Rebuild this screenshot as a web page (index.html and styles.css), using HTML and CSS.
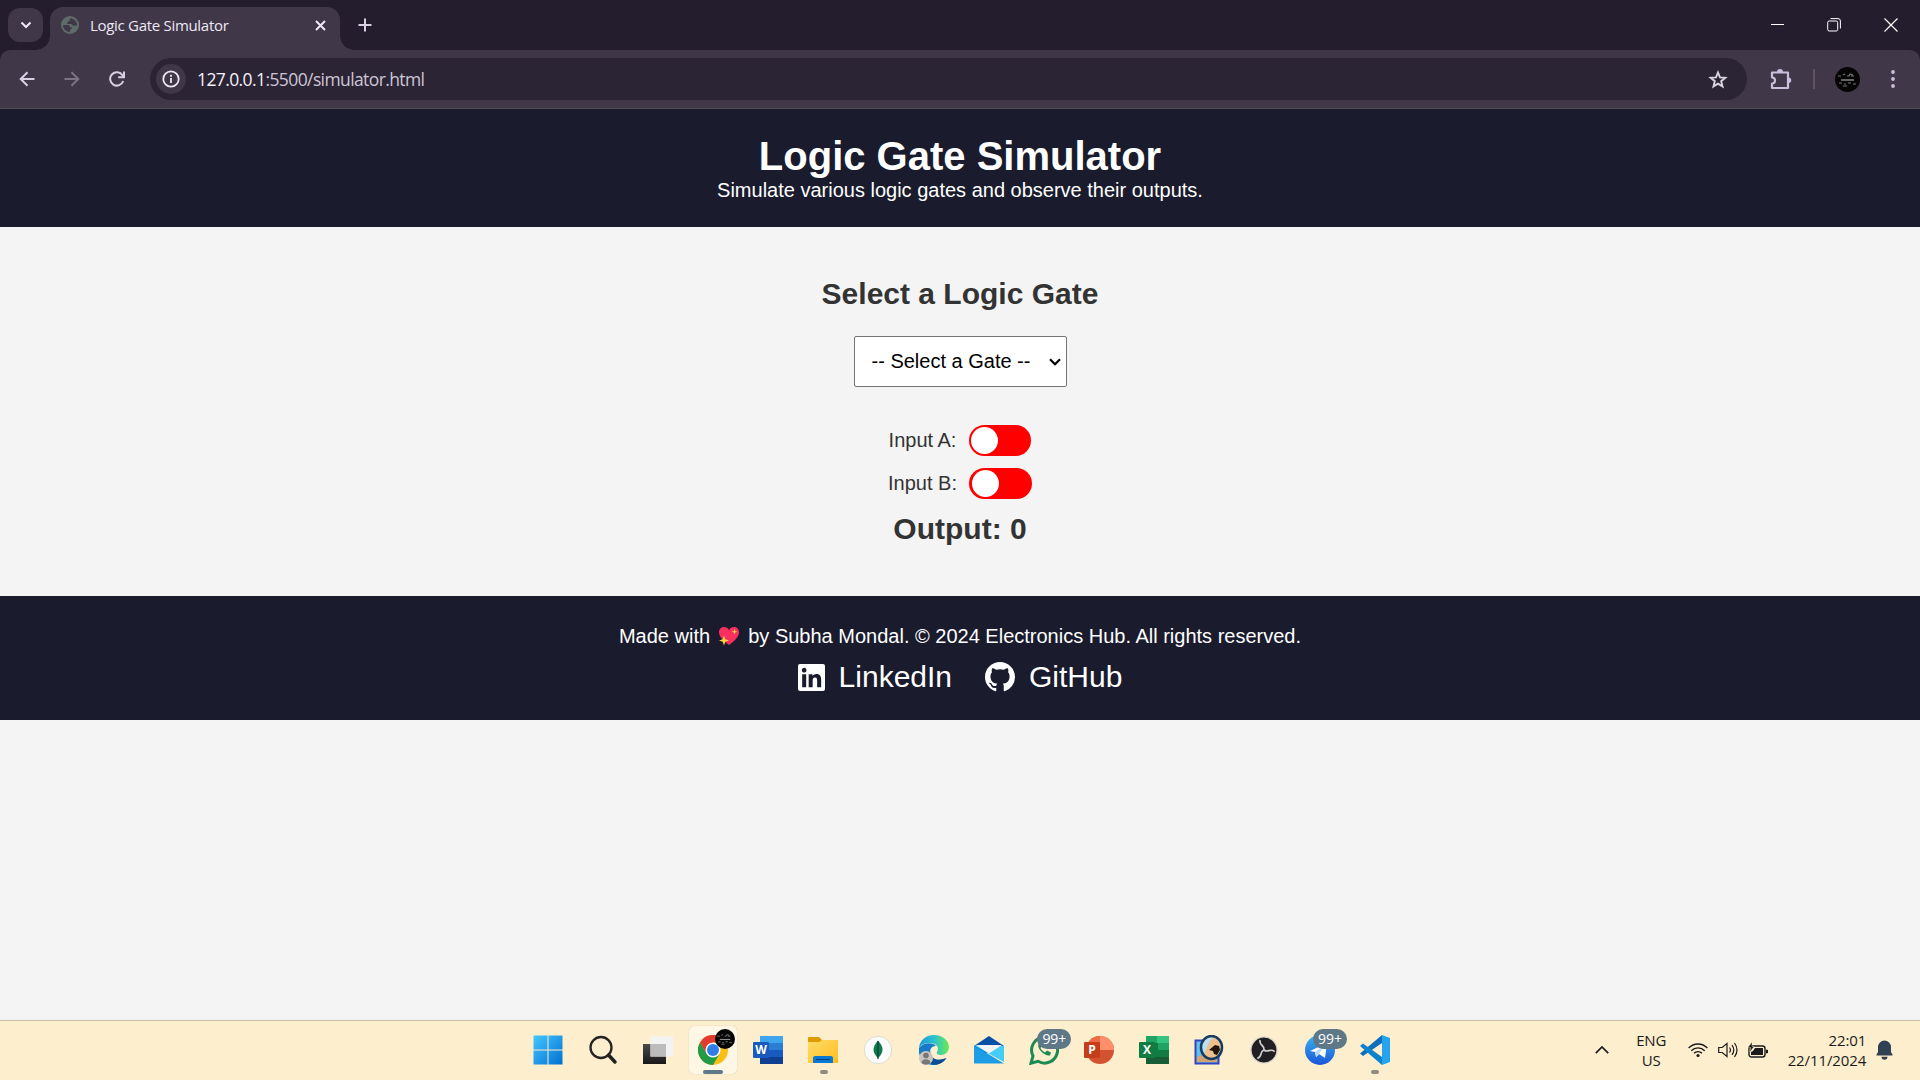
FILE: index.html
```html
<!DOCTYPE html>
<html lang="en">
<head>
<meta charset="utf-8">
<title>Logic Gate Simulator</title>
<link rel="stylesheet" href="styles.css">
</head>
<body>
<div class="browser">
<div class="tabstrip">
  <div class="tabsearch"><svg width="12" height="8" viewBox="0 0 12 8" fill="none" stroke="#eee8f4" stroke-width="2"><path d="M1.500 1.500 6 6l4.500-4.500"/></svg></div>
  <div class="tab">
    <svg width="18" height="18" viewBox="0 0 18 18"><circle cx="9" cy="9" r="9" fill="#5f6b68"/><path d="M9.500 2.200A7 7 0 0 1 16 9.500l-3.500.2c-1 0-1.300-1.700-2.500-1.700H6.500c-.8-1.300-.2-2.500 1-2.500 1.300 0 1-.8 1-1.700zM2 9h4.500c2 0 2.500 1 2.500 2.200l2 .3c0 1.500-1 1.700-2 1.900V16A7 7 0 0 1 2 9z" fill="#403749"/></svg>
    <span class="tab-title">Logic Gate Simulator</span>
    <svg width="11" height="11" viewBox="0 0 11 11" stroke="#eee8f4" stroke-width="2"><path d="M1 1l9 9M10 1l-9 9"/></svg>
  </div>
  <svg class="newtab" width="14" height="14" viewBox="0 0 14 14" stroke="#d9cfe4" stroke-width="2"><path d="M7 .5v13M.5 7h13"/></svg>
  <div class="winbtns">
    <svg width="13" height="13" viewBox="0 0 13 13" stroke="#fff"><path d="M0 6.500h13"/></svg>
    <svg width="14" height="14" viewBox="0 0 14 14" fill="none" stroke="#fff"><rect x=".7" y="3" width="10" height="10" rx="1.500"/><path d="M3.500.6H11a2.400 2.400 0 0 1 2.400 2.400v7.500"/></svg>
    <svg width="14" height="14" viewBox="0 0 14 14" stroke="#fff" stroke-width="1.200"><path d="M.5.5l13 13M13.500.5l-13 13"/></svg>
  </div>
</div>
<div class="toolbar">
  <svg class="back" width="16" height="16" viewBox="0 0 16 16" fill="none" stroke="#d9cfe4" stroke-width="2"><path d="M15.500 8H2M8.500 1.200 1.700 8l6.800 6.800"/></svg>
  <svg class="forward" width="16" height="16" viewBox="0 0 16 16" fill="none" stroke="#7c7286" stroke-width="2"><path d="M.5 8H14M7.500 1.200 14.300 8l-6.800 6.800"/></svg>
  <svg class="reload" width="16" height="16" viewBox="0 0 16 16" fill="none" stroke="#d9cfe4" stroke-width="2"><path d="M14.200 10A6.700 6.700 0 1 1 13.500 4.300L14.500 5.800M15 .5v5.800H9.200"/></svg>
  <div class="omnibox">
    <div class="info"><svg width="18" height="18" viewBox="0 0 18 18" fill="none" stroke="#eee8f4" stroke-width="1.800"><circle cx="9" cy="9" r="7.700"/><path d="M9 8v5M9 4.800v1.900"/></svg></div>
    <span class="url"><b>127.0.0.1</b>:5500/simulator.html</span>
    <svg class="star" width="20" height="19" viewBox="0 0 20 19" fill="none" stroke="#d9d3df" stroke-width="1.900"><path d="M10 2.500l2 4.900 5.300.4-4.100 3.400 1.300 5.200L10 13.600l-4.500 2.800 1.300-5.200-4.100-3.400 5.300-.4z"/></svg>
  </div>
  <svg class="puzzle" width="22" height="21" viewBox="0 0 22 21"><path d="M2 3.500h16v15.500H2v-4.500c4 0 4-6 0-6z" fill="none" stroke="#cabfdb" stroke-width="2.200" stroke-linejoin="round"/><path d="M7 3a3 3 0 0 1 6 0zM18.500 8.500a2.700 2.700 0 0 1 0 5.500z" fill="#cabfdb"/></svg>
  <span class="divider"></span>
  <svg class="avatar" width="25" height="25" viewBox="0 0 25 25"><use href="#face"/></svg>
  <svg class="dots" width="4" height="18" viewBox="0 0 4 18" fill="#cabfdb"><circle cx="2" cy="2" r="1.900"/><circle cx="2" cy="9" r="1.900"/><circle cx="2" cy="16" r="1.900"/></svg>
</div>
</div>

<header class="page-header">
  <h1>Logic Gate Simulator</h1>
  <p>Simulate various logic gates and observe their outputs.</p>
</header>
<main class="simulator">
  <h2>Select a Logic Gate</h2>
  <div class="gate" role="combobox" tabindex="0"><span>-- Select a Gate --</span><svg width="12" height="8" viewBox="0 0 12 8" fill="none" stroke="#000" stroke-width="2.200"><path d="M1 1.200 6 6.200l5-5"/></svg></div>
  <div class="inputs">
    <div class="input-row"><span>Input A:</span><span class="switch"></span></div>
    <div class="input-row"><span>Input B:</span><span class="switch"></span></div>
  </div>
  <h2 class="output">Output: 0</h2>
</main>
<footer class="page-footer">
  <p>Made with <svg class="heart" width="22" height="20" viewBox="0 0 22 20"><path d="M11 19C7 16 1 11.500 1 6.300 1 3 3.300 1 6 1c2.200 0 4 1.200 5 3 1-1.800 2.800-3 5-3 2.700 0 5 2 5 5.300C21 11.500 15 16 11 19z" fill="#f92f60"/><path d="M6 9.500l1.300 3.700L11 14.500l-3.700 1.300L6 19.500l-1.300-3.700L1 14.500l3.700-1.300zM16.500 3l.7 2.100 2.100.7-2.100.7-.7 2.100-.7-2.100-2.100-.7 2.100-.7z" fill="#fcd53f"/></svg> by Subha Mondal. © 2024 Electronics Hub. All rights reserved.</p>
  <div class="links">
    <a><svg width="27" height="27" viewBox="0 32 448 448" fill="#fff"><path d="M416 32H31.900C14.300 32 0 46.500 0 64.300v383.400C0 465.500 14.300 480 31.900 480H416c17.600 0 32-14.500 32-32.300V64.300c0-17.800-14.400-32.300-32-32.300zM135.400 416H69V202.200h66.500V416zm-33.200-243c-21.300 0-38.500-17.300-38.500-38.500S80.900 96 102.200 96c21.200 0 38.500 17.300 38.500 38.500 0 21.300-17.200 38.500-38.500 38.500zm282.100 243h-66.400V312c0-24.800-.5-56.700-34.500-56.700-34.600 0-39.900 27-39.900 54.900V416h-66.400V202.200h63.700v29.200h.9c8.900-16.800 30.600-34.500 62.900-34.500 67.200 0 79.700 44.300 79.700 101.900V416z"/></svg><span>LinkedIn</span></a>
    <a><svg width="30" height="30" viewBox="0 0 16 16" fill="#fff"><path d="M8 0C3.580 0 0 3.580 0 8c0 3.540 2.290 6.530 5.470 7.590.4.070.55-.17.55-.38 0-.19-.01-.82-.01-1.490-2.010.37-2.530-.49-2.690-.94-.09-.23-.48-.94-.82-1.130-.28-.15-.68-.52-.01-.53.63-.01 1.080.58 1.230.82.72 1.210 1.870.87 2.330.66.070-.52.28-.87.51-1.070-1.780-.2-3.640-.89-3.640-3.950 0-.87.31-1.590.82-2.150-.08-.2-.36-1.020.08-2.120 0 0 .67-.21 2.200.82.64-.18 1.320-.27 2-.27s1.360.09 2 .27c1.530-1.040 2.200-.82 2.200-.82.44 1.100.16 1.920.08 2.120.51.56.82 1.270.82 2.150 0 3.070-1.870 3.750-3.650 3.950.29.25.54.73.54 1.480 0 1.070-.01 1.930-.01 2.200 0 .21.15.46.55.38A8.010 8.010 0 0 0 16 8c0-4.420-3.580-8-8-8z"/></svg><span>GitHub</span></a>
  </div>
</footer>
<div class="blank"></div>

<div class="taskbar">
  <svg width="0" height="0" class="defs"><defs>
    <g id="face"><circle cx="12.500" cy="12.500" r="12.500" fill="#050505"/><path d="M3 9h3M8 8l2-1M12 9h2l1-2 3 1M16 9h3M4 16h3M9 17h2M13 16h3M18 17h3M8 19h4" stroke="#777" stroke-width="1.200" fill="none"/><path d="M6 13h13" stroke="#999" stroke-width="1.300"/></g>
    <linearGradient id="win" x1="0" y1="0" x2="1" y2="1"><stop offset="0" stop-color="#45c8ff"/><stop offset="1" stop-color="#006fd0"/></linearGradient>
    <linearGradient id="fold" x1="0" y1="0" x2="1" y2="1"><stop offset="0" stop-color="#ffdc69"/><stop offset="1" stop-color="#ffbd20"/></linearGradient>
    <linearGradient id="edge" x1="0" y1="0" x2="1" y2="0"><stop offset="0" stop-color="#1699dc"/><stop offset=".5" stop-color="#2ac2cf"/><stop offset="1" stop-color="#6aea50"/></linearGradient>
    <linearGradient id="tele" x1="0" y1="0" x2="0" y2="1"><stop offset="0" stop-color="#36b5f2"/><stop offset="1" stop-color="#1c55d8"/></linearGradient>
    <linearGradient id="dark" x1="0" y1="0" x2="0" y2="1"><stop offset="0" stop-color="#4a4a4a"/><stop offset="1" stop-color="#181818"/></linearGradient>
  </defs></svg>
  <div class="apps">
    <div class="app"><svg width="30" height="30" viewBox="0 0 30 30"><path d="M.5.500h14v14H.5zM15.500.500h14v14h-14zM.5 15.500h14v14H.5zM15.500 15.500h14v14h-14z" fill="url(#win)"/></svg></div>
    <div class="app"><svg width="30" height="30" viewBox="0 0 30 30" fill="none"><circle cx="13" cy="12.500" r="10.500" stroke="#252525" stroke-width="2.300"/><path d="M20.500 20l6.500 7" stroke="#222" stroke-width="3.500" stroke-linecap="round"/></svg></div>
    <div class="app"><svg width="30" height="30" viewBox="0 0 30 30"><path d="M0 9h23v20H0z" fill="url(#dark)"/><path d="M7.500 1.500H30v20H7.500z" fill="#f3f3f3"/><path d="M7.500 9H23v12.500H7.500z" fill="#bcbcbc"/></svg></div>
    <div class="app active"><svg width="30" height="30" viewBox="0 0 30 30"><circle cx="15" cy="15" r="15" fill="#f9bf15"/><path d="M2 7.500a15 15 0 0 1 26 0H15L8.500 18.700z" fill="#e33b2e"/><path d="M2 7.500A15 15 0 0 0 15 30l6.500-11.300H8.500z" fill="#229a48"/><circle cx="15" cy="15" r="7.500" fill="#fff"/><circle cx="15" cy="15" r="6" fill="#2f7de9"/></svg><svg class="profile" width="20" height="20" viewBox="0 0 25 25"><use href="#face"/></svg><i class="run wide"></i></div>
    <div class="app"><svg width="30" height="30" viewBox="0 0 30 30"><path d="M7 1h23v7H7z" fill="#41a5ee"/><path d="M7 8h23v7H7z" fill="#2b7cd3"/><path d="M7 15h23v7H7z" fill="#185abd"/><path d="M7 22h23v7H7z" fill="#103f91"/><rect x="0" y="7" width="16" height="16" rx="1" fill="#185abd"/><text x="8" y="19" class="letter">W</text></svg></div>
    <div class="app"><svg width="30" height="30" viewBox="0 0 30 30"><path d="M0 3q0-1 1-1h10l3 3v5H0z" fill="#df9c00"/><path d="M0 7h11l3-2h16v23H0z" fill="url(#fold)"/><path d="M5 28v-5q0-2 2-2h16q2 0 2 2v5z" fill="#0a79d4"/><path d="M8 24.500h14" stroke="#083f7c"/></svg><i class="run"></i></div>
    <div class="app"><svg width="30" height="30" viewBox="0 0 30 30"><circle cx="15" cy="15" r="13.700" fill="#fbfbfb" stroke="#dfdccf"/><path d="M15 5.500c6 6.500 6 12 0 17.500-6-5.500-6-11 0-17.500z" fill="#10774e"/><path d="M15 6v18" stroke="#073f31" stroke-width="1.200"/></svg></div>
    <div class="app"><svg width="30" height="30" viewBox="0 0 30 30"><path d="M0 13C1 4 8 0 15 0c9 0 15 6 15 12 0 5-4 8-8 8-3 0-5-1-4-3 3-5-1-9-7-9C5 8 2 10 0 13z" fill="url(#edge)"/><path d="M0 13c4-6 14-6 17-2-5 0-7 4-5 9 2 5 8 6 15 3-6 8-15 9-21 4C1 23-1 18 0 13z" fill="#147ac9"/><path d="M12 17c-1 7 6 10 15.500 6C24 29 17 31 12 29z" fill="#0b4d94"/><circle cx="7" cy="23" r="7" fill="#c9c5bd"/><circle cx="7" cy="20.500" r="2.800" fill="#777"/><path d="M2.500 28c0-5 9-5 9 0-2.500 2-6.500 2-9 0z" fill="#777"/></svg></div>
    <div class="app"><svg width="30" height="30" viewBox="0 0 30 30"><path d="M0 11 15 1l15 10v7H0z" fill="#0750a6"/><path d="M0 10.500 30 27V11z" fill="#43cdf7"/><path d="M0 10.500 30 28.500H0z" fill="#1d9de5"/><path d="M2 10h26L15 18.500z" fill="#f4f4f4"/></svg></div>
    <div class="app"><svg width="30" height="30" viewBox="0 0 30 30" fill="none" stroke="#1b8a55" stroke-width="3"><path d="M2 28.200l2-7.200a13 13 0 1 1 5 5.300z"/><path d="M9.500 8.500c-2 5 6 13 11.500 12l1-3-4-2-2 2c-2-1-4-3-4.500-4.500l1.500-2-1.500-3z" fill="#1b8a55" stroke="none"/></svg><span class="count">99+</span></div>
    <div class="app"><svg width="30" height="30" viewBox="0 0 30 30"><circle cx="16" cy="15" r="14" fill="#d35230"/><path d="M16 1v14H2A14 14 0 0 1 16 1z" fill="#ed6c47"/><path d="M16 1a14 14 0 0 1 14 14H16z" fill="#ff8f6b"/><rect y="7" width="16" height="16" rx="1" fill="#c43e1c"/><text x="8" y="19" class="letter">P</text></svg></div>
    <div class="app"><svg width="30" height="30" viewBox="0 0 30 30"><path d="M7 1h23v28H7z" fill="#21a366"/><path d="M18 1h12v7H18z" fill="#33c481"/><path d="M7 8h12v7H7z" fill="#107c41"/><path d="M7 15h23v7H7z" fill="#107c41"/><path d="M7 22h23v7H7z" fill="#185c37"/><rect y="7" width="16" height="16" rx="1" fill="#107c41"/><text x="8" y="19" class="letter">X</text></svg></div>
    <div class="app"><svg width="30" height="30" viewBox="0 0 30 30"><path d="M1.500 5.500h23v23h-23z" fill="#62c1e8" stroke="#3544bb" stroke-width="2"/><path d="M3 22l7-3 5 3 8-4v9H3z" fill="#d2a370"/><ellipse cx="17.500" cy="12.500" rx="10" ry="11.500" fill="#edc18f"/><path d="M8 16C7 5 13 1 19 3c-5 3-5 8-9 16z" fill="#b7e1ef"/><path d="M15 15l6-5 4 1 1 4-3 5-3-1-1-3z" fill="#21150d"/><ellipse cx="17.500" cy="12.500" rx="10.500" ry="11.500" fill="none" stroke="#183d65" stroke-width="2.500"/></svg></div>
    <div class="app"><svg width="30" height="30" viewBox="0 0 30 30" fill="none"><circle cx="15" cy="15" r="13" fill="#211f22" stroke="#d5d1cb" stroke-width="1.200"/><g stroke="#d0d0d0" stroke-width="1.700"><path d="M15 15c1-5-5-4-4-10"/><path d="M15 15c1-5-5-4-4-10" transform="rotate(120 15 15)"/><path d="M15 15c1-5-5-4-4-10" transform="rotate(240 15 15)"/></g></svg></div>
    <div class="app"><svg width="30" height="30" viewBox="0 0 30 30"><circle cx="15" cy="15" r="15" fill="url(#tele)"/><path d="M5 16 22 8l-2 15-6-4-3 3-1-5z" fill="#fff"/><path d="M10 17l9-6-5 8-3 3z" fill="#b9d8f3"/></svg><span class="count">99+</span></div>
    <div class="app"><svg width="30" height="30" viewBox="0 0 30 30"><path d="M22 0 0 18.500l3 2.500L22 8z" fill="#0a70bd"/><path d="M3 8.500 0 11l22 19v-8z" fill="#0c83cf"/><path d="M22 0l8 3v24l-8 3z" fill="#24a3ef"/></svg><i class="run"></i></div>
  </div>
  <svg class="chev" width="14" height="8" viewBox="0 0 14 8" fill="none" stroke="#1b1b1b" stroke-width="1.700"><path d="M.8 7.200 7 1l6.200 6.200"/></svg>
  <div class="lang">ENG<br>US</div>
  <div class="tray">
    <svg width="20" height="16" viewBox="0 0 20 16" fill="none" stroke="#1b1b1b" stroke-width="1.300"><path d="M.6 6a13 13 0 0 1 18.800 0M3.300 8.700a9.300 9.300 0 0 1 13.400 0M6 11.300a5.500 5.500 0 0 1 8 0"/><circle cx="10" cy="13.500" r="1.600" fill="#1b1b1b" stroke="none"/></svg>
    <svg width="20" height="16" viewBox="0 0 20 16" fill="none" stroke="#1b1b1b" stroke-width="1.200"><path d="M.7 5.500h3.500L9 1.500v13l-4.800-4H.7zM11.500 5.500q2 2.500 0 5M14 3.200q3.600 4.800 0 9.600M16.500 1q5 7 0 14"/></svg>
    <svg width="20" height="16" viewBox="0 0 20 16"><rect x="1" y="4" width="16" height="11" rx="2.500" fill="none" stroke="#1b1b1b" stroke-width="1.400"/><path d="M18 7.500l2 .5v3l-2 .5zM7 6h8v7H3v-3l2-1z" fill="#1b1b1b"/><path d="M4 0 0 5.500h2.500L2 10l4-5.500H4z" fill="#1b1b1b" stroke="#fdeecd" stroke-width=".4"/></svg>
  </div>
  <div class="clock">22:01<br>22/11/2024</div>
  <svg class="bell" width="17" height="20" viewBox="0 0 17 20" fill="#2f4254"><path d="M.5 15.500v-1l1.500-2.500V7a6.500 6.500 0 0 1 13 0v5l1.500 2.500v1zM5.500 16.800h6a3 3 0 0 1-6 0z"/></svg>
</div>
</body>
</html>
```
FILE: styles.css
```css
* { box-sizing: border-box; margin: 0; padding: 0; }
body { width: 1920px; height: 1080px; overflow: hidden; display: flex; flex-direction: column; background: #f4f4f4; color: #333; font: 20px "Liberation Sans", Arial, sans-serif; }
svg { flex: none; display: block; }

.browser { background: #241d2e; }
.tabstrip { height: 50px; display: flex; align-items: flex-start; padding-left: 8px; }
.tabsearch { width: 35px; height: 34px; margin-top: 8px; border-radius: 12px; background: #403749; display: flex; align-items: center; justify-content: center; }
.tab { position: relative; width: 290px; height: 43px; margin: 7px 0 0 7px; padding: 0 14px 7px 11px; border-radius: 13px 13px 0 0; background: #403749; display: flex; align-items: center; }
.tab::before, .tab::after { content: ""; position: absolute; bottom: 0; width: 14px; height: 14px; }
.tab::before { left: -14px; background: radial-gradient(circle at 0 0, transparent 13.500px, #403749 14px); }
.tab::after { right: -14px; background: radial-gradient(circle at 100% 0, transparent 13.500px, #403749 14px); }
.tab-title { flex: 1; margin-left: 11px; font: 15px "Open Sans", "Noto Sans", sans-serif; letter-spacing: -.3px; color: #eee8f4; }
.newtab { margin: 18px 0 0 18px; }
.winbtns { margin: 18px 22px 0 auto; display: flex; gap: 43px; }

.toolbar { height: 59px; background: #403749; border-bottom: 1px solid #514d55; border-radius: 10px 10px 0 0; display: flex; align-items: center; padding: 0 21px 0 19px; }
.forward { margin-left: 29px; }
.reload { margin-left: 29px; }
.omnibox { width: 1597px; height: 42px; margin-left: 25px; border-radius: 21px; background: #2b2434; display: flex; align-items: center; padding: 0 19px 0 6px; }
.info { width: 30px; height: 30px; border-radius: 50%; background: #403749; display: flex; align-items: center; justify-content: center; }
.url { margin-left: 11px; flex: 1; font: 17.500px "Open Sans", "Noto Sans", sans-serif; letter-spacing: -.6px; color: #cdc6d4; }
.url b { font-weight: 400; color: #f5f0fa; }
.puzzle { margin-left: 23px; }
.divider { width: 2px; height: 20px; margin-left: 21px; background: #5d5268; }
.avatar { margin-left: 20px; }
.dots { margin-left: auto; margin-right: 4px; }

.page-header { height: 118px; padding-top: 25px; background: #1a1b2d; color: #fff; text-align: center; }
.page-header h1 { font-size: 40px; line-height: 45px; }
.page-header p { line-height: 23px; }
.simulator { height: 369px; padding-top: 50px; display: flex; flex-direction: column; align-items: center; }
.simulator h2 { font-size: 30px; line-height: 34px; }
.gate { width: 213px; height: 51px; margin-top: 25px; padding: 0 5px 0 17px; display: flex; align-items: center; justify-content: space-between; background: #fff; color: #000; border: 1px solid #767676; border-radius: 2px; }
.inputs { margin-top: 38px; display: flex; flex-direction: column; gap: 12px; }
.input-row { display: flex; align-items: center; justify-content: center; gap: 12.500px; }
.switch { width: 62.500px; height: 31px; border-radius: 16px; background: #f00; display: flex; align-items: center; padding-left: 2.500px; }
.switch::before { content: ""; width: 27px; height: 27px; border-radius: 50%; background: #fff; }
.simulator .output { margin-top: 13px; }
.page-footer { height: 124px; padding-top: 29px; background: #1a1b2d; color: #fff; text-align: center; }
.page-footer p { line-height: 23px; }
.heart { display: inline-block; vertical-align: -3px; margin: 0 3px 0 2px; }
.links { display: flex; justify-content: center; gap: 33px; margin-top: 12px; font-size: 30px; line-height: 34px; }
.links a { display: flex; align-items: center; gap: 14px; }
.blank { flex: 1; }

.taskbar { height: 60px; border-top: 1px solid #c8bda5; background: #fdeecd; display: flex; align-items: center; padding: 0 0 2px 520px; color: #1b1b1b; font: 15px/20px "Open Sans", "Noto Sans", sans-serif; letter-spacing: -.1px; }
.defs { position: absolute; }
.apps { display: flex; }
.app { position: relative; width: 55.150px; height: 57px; display: flex; align-items: center; justify-content: center; }
.app.active::before { content: ""; position: absolute; left: 4px; top: 5px; width: 48px; height: 48px; border-radius: 5px; background: #fef7e6; box-shadow: 0 0 1px #bdb39c; }
.app.active svg { position: relative; }
.app.active .profile { position: absolute; left: 30px; top: 8px; }
.letter { font: bold 12px "Open Sans", sans-serif; letter-spacing: 0; fill: #fff; text-anchor: middle; }
.run { position: absolute; bottom: 4px; left: 24px; width: 8px; height: 4px; border-radius: 2px; background: #938b7b; }
.run.wide { left: 18px; width: 20px; background: #5f788a; }
.count { position: absolute; left: 21px; top: 8px; width: 34px; height: 20px; border-radius: 10px; background: #5f7887; color: #fff; font-size: 14px; line-height: 20px; text-align: center; }
.chev { margin-left: 193px; }
.lang { width: 50px; margin-left: 17px; text-align: center; }
.tray { display: flex; gap: 10px; margin-left: 12px; }
.clock { width: 90px; margin-left: 8px; text-align: right; }
.bell { margin-left: 10px; }
```
